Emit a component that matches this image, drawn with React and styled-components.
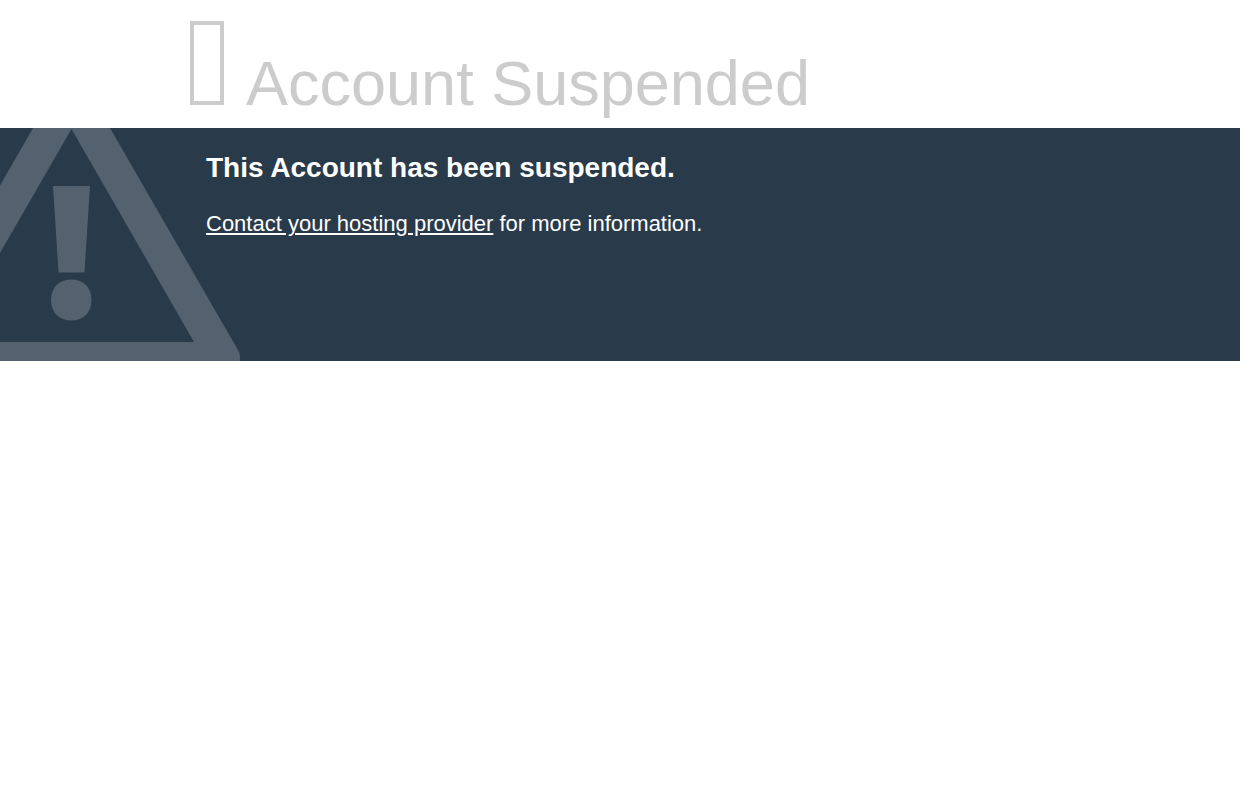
import React from "react";
import styled, { createGlobalStyle } from "styled-components";

function App() {
  return (
    <>
      <GlobalStyle />
      <Header>
        <Glyph aria-hidden="true" />
        <Title>Account Suspended</Title>
      </Header>
      <Banner>
        <WarningMark />
        <Reason>
          <h2>This Account has been suspended.</h2>
          <p>
            <a href="#contact">Contact your hosting provider</a> for more
            information.
          </p>
        </Reason>
      </Banner>
    </>
  );
}

function WarningMark() {
  return (
    <Warning viewBox="0 0 240 233" aria-hidden="true">
      <path
        fillRule="evenodd"
        d="M33 0H110L238 222Q240 225 240 229V233H0V214H194L71.5 1L0 125V57.500Z"
      />
      <path d="M53 58H90L84.500 144.500H58.500Z" />
      <path d="M71.300 151.500C83.500 151.500 91.500 159.500 91.500 172S83.500 192.500 71.300 192.500S51 184.500 51 172S59 151.500 71.300 151.500Z" />
    </Warning>
  );
}

export default App;

const GlobalStyle = createGlobalStyle`
  body {
    margin: 0;
    background: #fff;
    color: #ccc;
    font-family: "Liberation Sans", Arial, Helvetica, sans-serif;
    font-size: 14px;
  }
`;

const Header = styled.header`
  display: flex;
  align-items: baseline;
  gap: 22px;
  padding: 21px 15% 0;
`;

const Glyph = styled.span`
  flex: none;
  box-sizing: border-box;
  width: 34px;
  height: 84px;
  margin-left: 4px;
  border: 4px solid #ccc;
`;

const Title = styled.h1`
  margin: 0;
  font-size: 63px;
  font-weight: 400;
  line-height: 90px;
`;

const Banner = styled.section`
  position: relative;
  overflow: hidden;
  min-height: 233px;
  background: #293a4a;
  color: #fff;
`;

const Warning = styled.svg`
  position: absolute;
  left: 0;
  bottom: 0;
  width: 240px;
  height: 233px;
  fill: #54616e;
`;

const Reason = styled.div`
  position: relative;
  margin: 0 15%;
  padding: 20px;

  > h2 {
    margin: 0 0 20px;
    font-size: 28px;
    line-height: 40px;
  }

  > p {
    margin: 0;
    font-size: 22px;
    line-height: 32px;
  }

  a {
    color: #fff;
  }
`;
